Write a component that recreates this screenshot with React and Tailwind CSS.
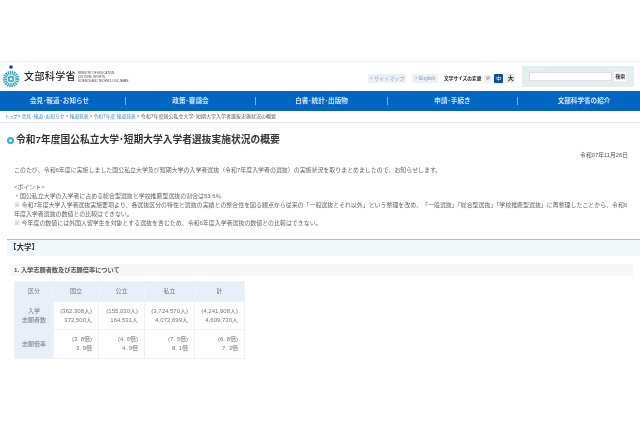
import React from 'react';

const navItems = [
  ['会見･報道･お知らせ', 'w-[126px] pr-[6px]'],
  ['政策･審議会', 'w-[130px]'],
  ['白書･統計･出版物', 'w-[132px]'],
  ['申請･手続き', 'w-[130px]'],
  ['文部科学省の紹介', 'w-[122px] pl-[10px]'],
];

const crumbs = ['会見･報道･お知らせ', '報道発表', '令和7年度 報道発表'];

const rows = [
  { label: ['入学', '志願者数'], cells: [['(362,308人)', '372,500人'], ['(155,030人)', '164,531人'], ['(3,724,570人)', '4,072,699人'], ['(4,241,908人)', '4,609,730人']] },
  { label: ['志願倍率'], cells: [['(3. 8倍)', '3. 9倍'], ['(4. 6倍)', '4. 9倍'], ['(7. 5倍)', '8. 1倍'], ['(6. 8倍)', '7. 3倍']] },
];

const Logo = () => (
  <svg width="22" height="24" viewBox="0 0 22 24" className="shrink-0">
    <circle cx="11" cy="2" r="1.8" fill="#14408c" />
    <circle cx="11" cy="14" r="6.2" fill="none" stroke="#3fa6b8" strokeWidth="4" strokeDasharray="1.3 0.65" />
    <circle cx="11" cy="14" r="3.2" fill="#3fa6b8" />
    <circle cx="11" cy="14" r="1.5" fill="#e8f6f8" />
  </svg>
);

const App = () => {
  return (
    <div className="w-[640px] h-[426px] overflow-hidden bg-white text-[#555] blur-[0.4px] font-['Liberation_Sans','Noto_Sans_CJK_JP',sans-serif]">
      <div className="h-[62px] border-b border-[#eeeeee]" />

      <header className="h-[29px] flex items-center">
        <div className="flex items-center w-[360px]">
          <Logo />
          <span className="ml-[2px] text-[10px] leading-none tracking-[0.4px] text-[#222] font-medium">文部科学省</span>
          <div className="ml-[2px] text-[2.9px] leading-[4px] text-[#444] whitespace-nowrap">
            <p>MINISTRY OF EDUCATION,</p>
            <p>CULTURE, SPORTS,</p>
            <p>SCIENCE AND TECHNOLOGY-JAPAN</p>
          </div>
        </div>
        <div className="flex items-center h-full">
          <span className="mt-[4px] ml-[8px] w-[38px] h-[9px] bg-[#eef1f4] text-[5px] leading-[9px] text-[#7b9cc4] text-center whitespace-nowrap">&gt; サイトマップ</span>
          <span className="mt-[4px] ml-[6px] w-[26px] h-[9px] bg-[#eef1f4] text-[5px] leading-[9px] text-[#7b9cc4] text-center whitespace-nowrap">&gt; English</span>
          <span className="mt-[4px] ml-[6px] text-[4.7px] font-bold text-[#222] whitespace-nowrap">文字サイズの変更</span>
          <span className="mt-[4px] ml-[3px] w-[7px] h-[8px] text-[4px] leading-[8px] text-center bg-[#eef1f4] text-[#222]">小</span>
          <span className="mt-[4px] ml-[3px] w-[9px] h-[9px] rounded-[1px] text-[5px] leading-[9px] text-center bg-[#0b4da2] text-white">中</span>
          <span className="mt-[4px] ml-[3px] w-[9px] h-[9px] rounded-[1px] text-[6px] leading-[9px] text-center bg-[#e2edf0] text-[#222] font-bold">大</span>
          <div className="ml-[7px] w-[112px] h-[21px] bg-[#e3eef0] flex items-center pl-[7px]">
            <div className="w-[83px] h-[9px] bg-white border border-[#e0e0e0]" />
            <span className="ml-[2px] w-[12px] h-[9px] bg-white text-[5px] leading-[9px] text-center font-bold text-[#333]">検索</span>
          </div>
        </div>
      </header>

      <nav className="h-[20px] bg-[#0066c2] flex items-center">
        {navItems.map(([item, width], i) => (
          <div key={item} className={`${width} h-[8px] flex items-center justify-center text-[6.6px] font-bold text-[#d5e5f5] whitespace-nowrap ${i < 4 ? 'border-r border-[#7fb2e0]' : ''}`}>
            {item}
          </div>
        ))}
      </nav>

      <div className="h-[12px] pl-[5px] flex items-center text-[4.8px] text-[#555] whitespace-nowrap border-b border-[#e6e6e6]">
        <span className="text-[#3d85c6] tracking-[-0.9px]">トップ</span>
        {crumbs.map((c) => (
          <React.Fragment key={c}>
            <span className="mx-[1px]">&gt;</span>
            <span className="text-[#3d85c6]">{c}</span>
          </React.Fragment>
        ))}
        <span className="mx-[1px]">&gt;</span>
        <span className="text-[5px]">令和7年度国公私立大学･短期大学入学者選抜実施状況の概要</span>
      </div>

      <main>
        <h1 className="mt-[11px] ml-[7px] flex items-center text-[9.75px] leading-[12px] font-bold text-[#333] whitespace-nowrap">
          <span className="w-[7px] h-[7px] rounded-full border-2 border-[#35a9d8] bg-white mr-[2px]" />
          令和7年度国公私立大学･短期大学入学者選抜実施状況の概要
        </h1>

        <p className="mt-[5px] pr-[12px] text-right text-[5.8px] leading-[9px]">令和07年11月26日</p>

        <div className="mt-[6px] pl-[14px] text-[5.95px] leading-[9px] whitespace-nowrap text-[#666]">
          <p>このたび、令和6年度に実施しました国公私立大学及び短期大学の入学者選抜（令和7年度入学者の選抜）の実施状況を取りまとめましたので、お知らせします。</p>
          <p className="mt-[8px]">&lt;ポイント&gt;</p>
          <p>・国公私立大学の入学者に占める総合型選抜と学校推薦型選抜の割合は53.6％</p>
          <p>※ 令和7年度大学入学者選抜実施要項より、各選抜区分の特性と選抜の実績との整合性を図る観点から従来の「一般選抜とそれ以外」という整理を改め、「一般選抜」「総合型選抜」「学校推薦型選抜」に再整理したことから、令和6</p>
          <p>年度入学者選抜の数値との比較はできない。</p>
          <p>※ 今年度の数値には外国人留学生を対象とする選抜を含むため、令和6年度入学者選抜の数値との比較はできない。</p>
        </div>

        <h2 className="mt-[11px] ml-[7px] h-[17px] border-t border-[#7ccbe0] bg-[#f1f8fb] pl-[2px] text-[7.5px] leading-[15px] font-bold text-[#333]">【大学】</h2>

        <h3 className="mt-[8px] ml-[10px] mr-[7px] h-[12px] bg-[#f7f7f7] pl-[4px] text-[6.2px] leading-[12px] font-bold text-[#555]">1. 入学志願者数及び志願倍率について</h3>

        <table className="mt-[5px] ml-[14px] table-fixed border-collapse text-[6px] leading-[9px] text-[#777] whitespace-nowrap">
          <thead>
            <tr className="h-[20px] bg-[#e8eff9]">
              {[['区分', 'w-[39px]'], ['国立', 'w-[45px]'], ['公立', 'w-[46px]'], ['私立', 'w-[50px]'], ['計', 'w-[50px]']].map(([h, w]) => (
                <th key={h} className={`${w} font-normal text-center border border-[#eef3fa]`}>{h}</th>
              ))}
            </tr>
          </thead>
          <tbody>
            {rows.map((row, i) => (
              <tr key={i} className={i === 0 ? 'h-[28px]' : 'h-[29px]'}>
                <td className="bg-[#e8eff9] text-center border border-[#eef3fa]">
                  {row.label.map((l) => <p key={l}>{l}</p>)}
                </td>
                {row.cells.map((c, j) => (
                  <td key={j} className="text-right pr-[6px] border border-[#f0f0f0]">
                    {c.map((l) => <p key={l}>{l}</p>)}
                  </td>
                ))}
              </tr>
            ))}
          </tbody>
        </table>
      </main>
    </div>
  );
};

export default App;
